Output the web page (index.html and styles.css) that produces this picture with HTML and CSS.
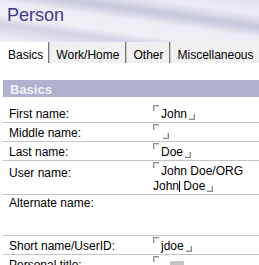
FILE: index.html
```html
<!DOCTYPE html>
<html>
<head>
<meta charset="utf-8">
<title>Person</title>
<link rel="stylesheet" href="styles.css">
</head>
<body>
<div class="header"><h1 class="title">Person</h1></div>
<div class="tabs">
  <div class="tab active">Basics</div><div class="sep"></div>
  <div class="tab">Work/Home</div><div class="sep"></div>
  <div class="tab">Other</div><div class="sep"></div>
  <div class="tab">Miscellaneous</div>
</div>
<div class="content">
  <div class="section">Basics</div>
  <div class="rows">
    <div class="row">
      <div class="label">First name:</div>
      <div class="value"><span class="mk-start"></span>John<span class="mk-end"></span></div>
    </div>
    <div class="row">
      <div class="label">Middle name:</div>
      <div class="value"><span class="mk-start"></span><span class="mk-end"></span></div>
    </div>
    <div class="row">
      <div class="label">Last name:</div>
      <div class="value"><span class="mk-start"></span>Doe<span class="mk-end"></span></div>
    </div>
    <div class="row row-tall">
      <div class="label label-low">User name:</div>
      <div class="value"><span class="mk-start"></span>John Doe/ORG John<span class="caret"></span> Doe<span class="mk-end"></span></div>
    </div>
    <div class="row row-xtall">
      <div class="label label-high">Alternate name:</div>
      <div class="value"></div>
    </div>
    <div class="row">
      <div class="label">Short name/UserID:</div>
      <div class="value"><span class="mk-start"></span>jdoe<span class="mk-end"></span></div>
    </div>
    <div class="row">
      <div class="label">Personal title:</div>
      <div class="value"><span class="mk-start"></span><span class="dropbtn"></span></div>
    </div>
  </div>
</div>
</body>
</html>
```

FILE: styles.css
```css
html, body {
  margin: 0;
  padding: 0;
  background: #ffffff;
}
body {
  font-family: "Liberation Sans", Arial, sans-serif;
  font-size: 12px;
  color: #000000;
  width: 259px;
  height: 265px;
  overflow: hidden;
}
.header {
  height: 42px;
  box-sizing: border-box;
  padding: 5px 0 0 7px;
  background: linear-gradient(188deg,
    #e2e2ed 0%, #ebebf3 18%, #d8d8e7 27%, #c7c7dc 34%, #d6d6e6 41%,
    #ececf4 48%, #efeff6 66%, #d3d3e4 76%, #dcdce9 84%, #ebebf3 94%, #ededf4 100%);
}
.title {
  margin: 0;
  font-size: 18px;
  font-weight: normal;
  line-height: 20px;
  color: #3b3a8c;
}
.tabs {
  display: flex;
  height: 21px;
  background: #f0f0f0;
  white-space: nowrap;
  overflow: hidden;
}
.tab {
  flex: none;
  padding: 5px 6px 0;
  line-height: 16px;
}
.tab.active {
  background: #ffffff;
  padding-left: 8px;
  padding-right: 5px;
}
.sep {
  flex: none;
  width: 1px;
  background: #767676;
  border-right: 1px solid #c8c8c8;
}
.content {
  margin: 17px 0 0 3px;
}
.section {
  height: 17px;
  box-sizing: border-box;
  padding: 3px 0 0 7px;
  background: #b0b0cf;
  color: #f2f2f8;
  font-weight: bold;
  font-size: 13px;
  line-height: 14px;
}
.rows {
  margin-top: 7px;
}
.row {
  display: flex;
  min-height: 18px;
  border-bottom: 1px solid #c4c4c4;
}
.row-tall {
  min-height: 33px;
}
.row-xtall {
  min-height: 40px;
}
.label {
  flex: none;
  width: 150px;
  box-sizing: border-box;
  padding: 2.5px 0 0 6px;
  line-height: 15px;
}
.label-low {
  padding-top: 5px;
}
.label-high {
  padding-top: 1px;
}
.value {
  flex: 1;
  min-width: 0;
  padding-top: 1px;
  line-height: 15px;
}
.mk-start,
.mk-end {
  display: inline-block;
  width: 6px;
  height: 6px;
  box-sizing: border-box;
}
.mk-start {
  border-top: 1px solid #8c8c8c;
  border-left: 1px solid #8c8c8c;
  box-shadow: inset 1px 1px 0 #d6d6d6;
  vertical-align: 7px;
  margin-right: 2px;
}
.mk-end {
  border-bottom: 1px solid #8c8c8c;
  border-right: 1px solid #8c8c8c;
  box-shadow: inset -1px -1px 0 #d6d6d6;
  vertical-align: -2px;
  margin-left: 2px;
}
.caret {
  display: inline-block;
  width: 1px;
  height: 11px;
  background: #000000;
  vertical-align: -2px;
}
.dropbtn {
  display: inline-block;
  width: 14px;
  height: 10px;
  margin-left: 9px;
  background: #c4c4c4;
  vertical-align: -2px;
}
```
